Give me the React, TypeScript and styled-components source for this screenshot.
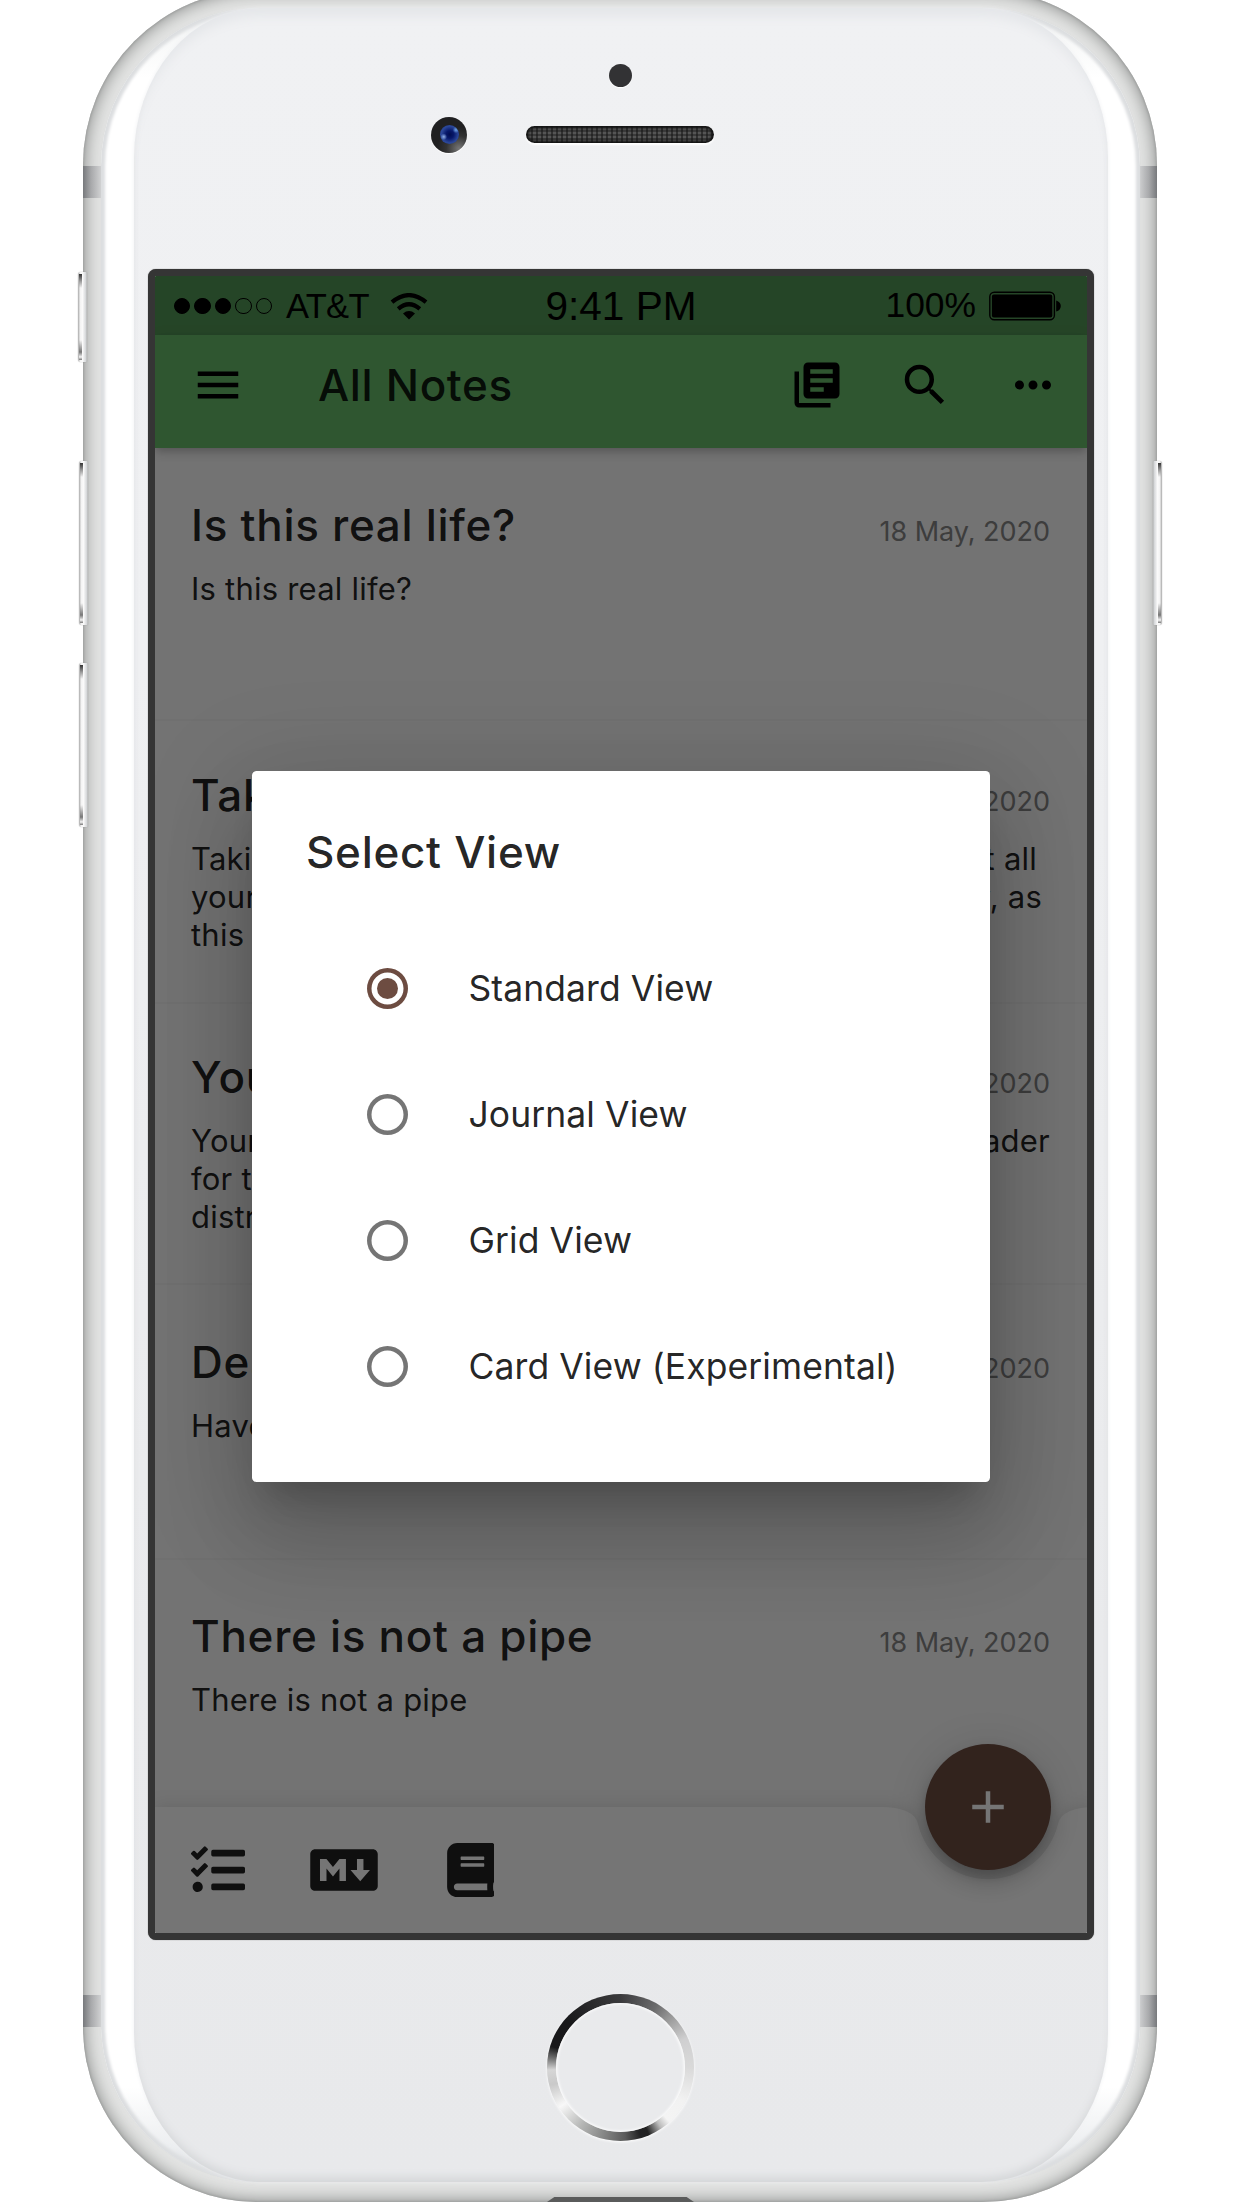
import React from "react";
import styled, { createGlobalStyle, css } from "styled-components";
import { MdMenu, MdLibraryBooks, MdSearch, MdMoreHoriz, MdAdd } from "react-icons/md";
import { FaTasks, FaMarkdown, FaBook } from "react-icons/fa";

const GlobalStyle = createGlobalStyle`
  * { box-sizing: border-box; }
  body { margin: 0; background: #fff; overflow: hidden; }
  svg { display: block; }
`;

const uiFont = '"Inter", "Noto Sans", sans-serif';
const statusFont = '"Liberation Sans", Arial, sans-serif';

const Page = styled.main`
  width: 1242px;
  height: 2208px;
  padding-left: 83px;
  overflow: hidden;
  background: #fff;
`;

/* ---------- device ---------- */

const Phone = styled.div`
  position: relative;
  width: 1074px;
  height: 2212px;
  margin-top: -10px;
  padding: 18px 17px 20px 18px;
  display: flex;
  border-radius: 175px;
  background: #e3e4e3;
  box-shadow: inset 0 0 3px #8c8e8d, inset 0 0 17px 1px #858786;
`;

const Glass = styled.div`
  position: relative;
  flex: 1;
  display: flex;
  padding: 0 32px 0 33px;
  border-radius: 158px;
  background: linear-gradient(#e9ebed 0, #f6f7f7 28px, #fff 70px, #fff calc(100% - 95px), #eceef0 calc(100% - 35px), #d6d8da 100%);
  box-shadow: inset 0 0 3px 4px #dcdee0, 0 0 1px 0 #cfd0d0;
`;

const Face = styled.div`
  flex: 1;
  display: flex;
  flex-direction: column;
  align-items: center;
  border-radius: 126px / 150px;
  background: linear-gradient(#f0f1f3, #eff0f2 30%, #e9eaec 75%, #e8e9eb);
  box-shadow: inset 0 14px 12px -6px #e4e6e9, inset 0 -8px 8px -3px #d5d7d9, 0 0 4px #f0f1f3;
`;

const Sensor = styled.div`
  width: 23px;
  height: 23px;
  margin: 55.5px 1px 0 0;
  border-radius: 50%;
  background: #323234;
  box-shadow: 0 1px 1px #fff;
`;

const EarRow = styled.div`
  display: grid;
  grid-template-columns: 1fr 188px 1fr;
  align-items: center;
  width: 100%;
  height: 36px;
  margin-top: 30px;
  padding-right: 2px;
`;

const Camera = styled.div`
  justify-self: end;
  width: 36px;
  height: 36px;
  margin-right: 59px;
  display: grid;
  place-items: center;
  border-radius: 50%;
  background: radial-gradient(circle at 78% 88%, #777 0, #333 30%, #202021 52%);
  box-shadow: 0 1px 1px #fff;
`;

const Lens = styled.div`
  width: 19px;
  height: 19px;
  border-radius: 50%;
  background:
    radial-gradient(circle at 20% 62%, #8fb0e8 0, transparent 17%),
    radial-gradient(circle at 84% 26%, #6fa5e8 0, transparent 15%),
    radial-gradient(circle at 52% 50%, #010d4e 0, #07186a 28%, #2a4698 60%, #2b4699 100%);
`;

const Speaker = styled.div`
  height: 17px;
  border-radius: 9px;
  background:
    repeating-linear-gradient(90deg, rgba(20, 20, 20, 0.55) 0 2px, transparent 2px 5px),
    repeating-linear-gradient(#3a3a3a 0 2px, #555 2px 4px);
  box-shadow: inset 0 0 3px 2px #121212, 0 2px 2px #fff;
`;

const HomeButton = styled.div`
  width: 147px;
  height: 147px;
  margin: 54px 2px 0 0;
  padding: 9px;
  border-radius: 50%;
  background: conic-gradient(#3a3a3c 0deg, #6b6b6c 30deg, #999 45deg, #cfcfd0 66deg, #d9d9d9 90deg, #f2f2f2 118deg, #f4f4f4 138deg, #bbb 146deg, #222 157deg, #232324 164deg, #5a5a5a 176deg, #8a8b8a 196deg, #b5b6b5 214deg, #f8f8f8 237deg, #c9c9c9 256deg, #d6d6d6 268deg, #777 277deg, #18181a 287deg, #18181a 310deg, #2e2e30 340deg, #3a3a3c 360deg);
  box-shadow: 0 1px 3px #fff;
`;

const HomeCap = styled.div`
  height: 100%;
  border-radius: 50%;
  background: #e9eaec;
  box-shadow: inset 0 0 3px 1px #fff;
`;

const Band = styled.i<{ $side: "left" | "right"; $top: number }>`
  position: absolute;
  top: ${(p) => p.$top}px;
  ${(p) => p.$side}: 0;
  width: 18px;
  height: 32px;
  background: linear-gradient(${(p) => (p.$side === "left" ? "90deg" : "270deg")}, #77797c, #a8a9ab 45%, #d0d1d2);
`;

const SideKey = styled.i<{ $side: "left" | "right"; $top: number; $height: number; $out: number }>`
  position: absolute;
  top: ${(p) => p.$top}px;
  ${(p) => p.$side}: -${(p) => p.$out}px;
  width: 9px;
  height: ${(p) => p.$height}px;
  border-radius: ${(p) => (p.$side === "left" ? "3px 1px 1px 3px" : "1px 3px 3px 1px")};
  background:
    linear-gradient(#333 0, #999 7px, transparent 14px, transparent calc(100% - 20px), #777 calc(100% - 8px), #f4f4f4 calc(100% - 3px), #777 100%)
      ${(p) => (p.$side === "left" ? "1px" : "5px")} 2px / 3px calc(100% - 4px) no-repeat,
    linear-gradient(${(p) => (p.$side === "left" ? "90deg" : "270deg")}, #aaa 0, #f3f3f3 25%, #fafafa 50%, #d6d8da 85%, #b4b6b6 100%);
  box-shadow: 0 0 1px #888;
`;

const Port = styled.i`
  position: absolute;
  left: 464px;
  bottom: 0;
  width: 147px;
  height: 5px;
  background: #5a5b5b;
  clip-path: polygon(5% 0, 95% 0, 100% 100%, 0 100%);
`;

/* ---------- screen ---------- */

const Screen = styled.section`
  position: relative;
  width: 946px;
  height: 1671px;
  margin-top: 116px;
  border: 7px solid #353535;
  border-radius: 8px;
  box-shadow: 0 0 1px #555;
  display: flex;
  flex-direction: column;
  flex-shrink: 0;
  overflow: hidden;
  background: #fafafa;
  font-family: ${uiFont};
  color: rgba(0, 0, 0, 0.87);
`;

const StatusBar = styled.div`
  display: grid;
  grid-template-columns: 1fr auto 1fr;
  align-items: center;
  height: 59px;
  padding: 2px 19px 0;
  background: #529655;
  color: #000;
  font-family: ${statusFont};
  font-size: 34.5px;
  line-height: 1;
  z-index: 1;
`;

const StatusGroup = styled.div<{ $end?: boolean }>`
  display: flex;
  align-items: center;
  justify-content: ${(p) => (p.$end ? "flex-end" : "flex-start")};
`;

const Dots = styled.div`
  display: flex;
  gap: 4px;
  margin-right: 14px;
`;

const Dot = styled.i<{ $on: boolean }>`
  width: 16.4px;
  height: 16.4px;
  border: 1px solid #000;
  border-radius: 50%;
  background: ${(p) => (p.$on ? "#000" : "transparent")};
`;

const Carrier = styled.span`
  margin-right: 21px;
  letter-spacing: -0.7px;
`;

const Clock = styled.span`
  font-size: 40.6px;
`;

const Percent = styled.span`
  font-size: 35.4px;
`;

const Battery = styled.svg`
  margin: 0 7px 0 13px;
`;

const AppBar = styled.header`
  display: flex;
  align-items: center;
  height: 113px;
  padding: 0 27px 13px 36px;
  background: #66bb6a;
  color: #000;
  box-shadow: 0 3px 7px -2px rgba(0, 0, 0, 0.16), 0 6px 9px rgba(0, 0, 0, 0.1), 0 2px 16px rgba(0, 0, 0, 0.06);
  z-index: 1;
`;

const AppTitle = styled.h1`
  flex: 1;
  margin: 0 0 0 73px;
  font-size: 44px;
  font-weight: 460;
  line-height: 54px;
  letter-spacing: 0.65px;
  color: rgba(0, 0, 0, 0.87);
`;

const Actions = styled.div`
  display: flex;
  gap: 54px;
`;

const NoteList = styled.div`
  flex: 1;
  min-height: 0;
  overflow: hidden;
`;

const Note = styled.article<{ $height: number; $top: number }>`
  height: ${(p) => p.$height}px;
  padding: ${(p) => p.$top}px 37px 0 36px;
  border-bottom: 2px solid #f4f4f4;
`;

const NoteHead = styled.div`
  display: flex;
  justify-content: space-between;
  align-items: baseline;
`;

const NoteTitle = styled.h2`
  margin: 0;
  font-size: 44px;
  line-height: 60px;
  font-weight: 490;
  letter-spacing: 0.7px;
  white-space: nowrap;
`;

const NoteDate = styled.time`
  font-size: 27px;
  line-height: 36px;
  letter-spacing: -0.03px;
  color: #858585;
`;

const NoteLine = styled.p<{ $inset: number }>`
  display: flex;
  justify-content: space-between;
  margin: 0;
  padding-right: ${(p) => p.$inset}px;
  font-size: 31px;
  line-height: 38.2px;
  letter-spacing: 0.22px;
`;

const NoteBody = styled.div`
  padding-top: 15px;
`;

const BottomBar = styled.footer`
  position: relative;
  height: 126px;
  display: flex;
  align-items: center;
  padding: 0 36px;
`;

const BarShape = styled.svg`
  position: absolute;
  inset: 0;
  overflow: visible;
  filter: drop-shadow(0 0 9px rgba(0, 0, 0, 0.12));
`;

const BarIcon = styled.span<{ $width: number; $after?: number }>`
  position: relative;
  width: ${(p) => p.$width}px;
  margin-right: ${(p) => p.$after ?? 0}px;
  svg { width: 100%; height: 54px; }
`;

const Fab = styled.button`
  position: absolute;
  top: -63px;
  right: 36px;
  width: 126px;
  height: 126px;
  padding: 0;
  display: grid;
  place-items: center;
  border: 0;
  border-radius: 50%;
  background: #6d4c41;
  color: #fff;
  box-shadow: 0 7px 11px -2px rgba(0, 0, 0, 0.2), 0 13.5px 22px rgba(0, 0, 0, 0.14), 0 2px 40px rgba(0, 0, 0, 0.12);
`;

/* ---------- dialog ---------- */

const Scrim = styled.div`
  position: absolute;
  inset: 0;
  z-index: 2;
  display: flex;
  align-items: center;
  justify-content: center;
  padding-top: 45px;
  background: rgba(0, 0, 0, 0.54);
`;

const Dialog = styled.div`
  width: 738px;
  height: 711px;
  padding: 54px 0 0;
  border-radius: 4.5px;
  background: #fff;
  box-shadow: 0 25px 34px -16px rgba(0, 0, 0, 0.2), 0 54px 86px 7px rgba(0, 0, 0, 0.14), 0 20px 104px 18px rgba(0, 0, 0, 0.12);
`;

const DialogTitle = styled.h2`
  margin: 0 0 46px;
  padding-left: 54px;
  font-size: 44px;
  font-weight: 460;
  line-height: 54px;
  letter-spacing: 0.7px;
`;

const Option = styled.label`
  display: flex;
  align-items: center;
  height: 126px;
  padding-left: 114.5px;
  font-size: 35.5px;
  letter-spacing: 0.08px;
  white-space: nowrap;
`;

const Radio = styled.i<{ $checked: boolean }>`
  width: 41px;
  height: 41px;
  margin-right: 61px;
  display: grid;
  place-items: center;
  box-shadow: inset 0 0 0 4.5px ${(p) => (p.$checked ? "#6d4c41" : "#757575")};
  border-radius: 50%;
  ${(p) =>
    p.$checked &&
    css`
      &::after {
        content: "";
        width: 21px;
        height: 21px;
        border-radius: 50%;
        background: #6d4c41;
      }
    `}
`;

type NoteData = {
  title: string;
  height: number;
  top: number;
  lines: { start: string; end?: string; inset?: number }[];
};

const notes: NoteData[] = [
  { title: "Is this real life?", height: 273, top: 47, lines: [{ start: "Is this real life?" }] },
  {
    title: "Taking Notes",
    height: 283,
    top: 44.5,
    lines: [
      { start: "Taking notes", end: "about all", inset: 13 },
      { start: "your ideas", end: "easy, as", inset: 8 },
      { start: "this" },
    ],
  },
  {
    title: "Your Reader",
    height: 281.5,
    top: 43.5,
    lines: [{ start: "Your notes", end: "reader", inset: 0 }, { start: "for the" }, { start: "distraction" }],
  },
  { title: "Dear Diary", height: 274.5, top: 46.5, lines: [{ start: "Have" }] },
  { title: "There is not a pipe", height: 273, top: 46.5, lines: [{ start: "There is not a pipe" }] },
];

const views = ["Standard View", "Journal View", "Grid View", "Card View (Experimental)"];

export default function App() {
  return (
    <Page>
      <GlobalStyle />
      <Phone>
        <SideKey $side="left" $top={282} $height={90} $out={5} />
        <SideKey $side="left" $top={471} $height={164} $out={4} />
        <SideKey $side="left" $top={673} $height={164} $out={4} />
        <SideKey $side="right" $top={471} $height={164} $out={5} />
        <Band $side="left" $top={176} />
        <Band $side="right" $top={176} />
        <Band $side="left" $top={2005} />
        <Band $side="right" $top={2005} />
        <Port />
        <Glass>
          <Face>
            <Sensor />
            <EarRow>
              <Camera>
                <Lens />
              </Camera>
              <Speaker />
            </EarRow>
            <Screen>
              <StatusBar>
                <StatusGroup>
                  <Dots>
                    {[true, true, true, false, false].map((on, i) => (
                      <Dot key={i} $on={on} />
                    ))}
                  </Dots>
                  <Carrier>AT&amp;T</Carrier>
                  <svg width="38" height="27" viewBox="0 0 38 27">
                    <path d="M2 9.2 Q19 -5 36 9.2" fill="none" stroke="#000" strokeWidth="4.2" />
                    <path d="M8.2 15.8 Q19 6.6 29.8 15.8" fill="none" stroke="#000" strokeWidth="4.2" />
                    <path d="M13 20.5 Q19 15.6 25 20.5 L19 26.5 Z" />
                  </svg>
                </StatusGroup>
                <Clock>9:41 PM</Clock>
                <StatusGroup $end>
                  <Percent>100%</Percent>
                  <Battery width="72" height="30" viewBox="0 0 72 30">
                    <rect x="0.8" y="1.2" width="64.6" height="27.6" rx="4.5" fill="none" stroke="#000" strokeWidth="1.4" />
                    <rect x="2.9" y="3.4" width="60.4" height="23.2" rx="2" />
                    <path d="M67.2 9.4 Q71.8 11 71.8 15 T67.2 20.6 Z" />
                  </Battery>
                </StatusGroup>
              </StatusBar>
              <AppBar>
                <MdMenu size={54} />
                <AppTitle>All Notes</AppTitle>
                <Actions>
                  <MdLibraryBooks size={54} />
                  <MdSearch size={54} />
                  <MdMoreHoriz size={54} />
                </Actions>
              </AppBar>
              <NoteList>
                {notes.map((note) => (
                  <Note key={note.title} $height={note.height} $top={note.top}>
                    <NoteHead>
                      <NoteTitle>{note.title}</NoteTitle>
                      <NoteDate>18 May, 2020</NoteDate>
                    </NoteHead>
                    <NoteBody>
                      {note.lines.map((line) => (
                        <NoteLine key={line.start} $inset={line.inset ?? 0}>
                          <span>{line.start}</span>
                          {line.end && <span>{line.end}</span>}
                        </NoteLine>
                      ))}
                    </NoteBody>
                  </Note>
                ))}
              </NoteList>
              <BottomBar>
                <BarShape width="932" height="126" viewBox="0 0 932 126">
                  <path fill="#fff" d="M0 0 H725 Q759 0 763 17 A72 72 0 0 0 903 17 Q907 0 941 0 V126 H0 Z" />
                </BarShape>
                <BarIcon $width={54} $after={65}>
                  <FaTasks />
                </BarIcon>
                <BarIcon $width={68} $after={68.5}>
                  <FaMarkdown />
                </BarIcon>
                <BarIcon $width={47.5}>
                  <FaBook />
                </BarIcon>
                <Fab aria-label="Add note">
                  <MdAdd size={54} />
                </Fab>
              </BottomBar>
              <Scrim>
                <Dialog role="dialog">
                  <DialogTitle>Select View</DialogTitle>
                  {views.map((view, i) => (
                    <Option key={view}>
                      <Radio $checked={i === 0} />
                      {view}
                    </Option>
                  ))}
                </Dialog>
              </Scrim>
            </Screen>
            <HomeButton>
              <HomeCap />
            </HomeButton>
          </Face>
        </Glass>
      </Phone>
    </Page>
  );
}
